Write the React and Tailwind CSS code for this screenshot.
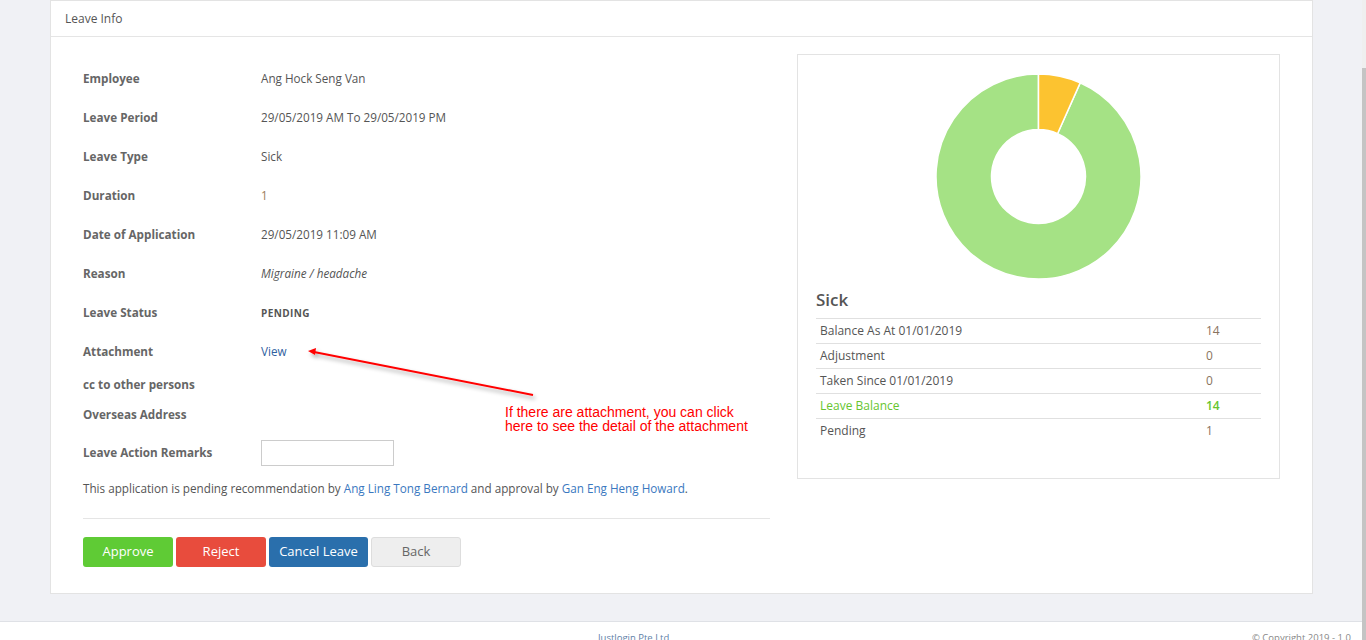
import React from "react";

const rows = [
  { label: "Employee", value: "Ang Hock Seng Van", h: "h-[39px]" },
  { label: "Leave Period", value: "29/05/2019 AM To 29/05/2019 PM", h: "h-[39px]" },
  { label: "Leave Type", value: "Sick", h: "h-[39px]" },
  { label: "Duration", value: <span className="text-[#9b7b5b]">1</span>, h: "h-[39px]" },
  { label: "Date of Application", value: "29/05/2019 11:09 AM", h: "h-[39px]" },
  { label: "Reason", value: <span className="italic">Migraine / headache</span>, h: "h-[39px]" },
  {
    label: "Leave Status",
    value: <span className="text-[10px] font-bold tracking-[0.4px] text-[#555]">PENDING</span>,
    h: "h-[39px]",
  },
  { label: "Attachment", value: <span className="text-[#2f5f9f]">View</span>, h: "h-[40px]" },
  { label: "cc to other persons", value: "", h: "h-[25px]" },
  { label: "Overseas Address", value: "", h: "h-[35px]" },
  {
    label: "Leave Action Remarks",
    value: <div className="w-[133px] h-[26px] border border-[#ccc] bg-white" />,
    h: "h-[42px]",
  },
];

const table = [
  ["Balance As At 01/01/2019", "14", false],
  ["Adjustment", "0", false],
  ["Taken Since 01/01/2019", "0", false],
  ["Leave Balance", "14", true],
  ["Pending", "1", false],
];

function Donut() {
  const cx = 102.5, cy = 102.5, R = 102.5, r = 47;
  const a = (24 * Math.PI) / 180;
  const ox = cx + R * Math.sin(a), oy = cy - R * Math.cos(a);
  const ix = cx + r * Math.sin(a), iy = cy - r * Math.cos(a);
  const yellow = `M ${cx} ${cy - R} A ${R} ${R} 0 0 1 ${ox} ${oy} L ${ix} ${iy} A ${r} ${r} 0 0 0 ${cx} ${cy - r} Z`;
  const green = `M ${ox} ${oy} A ${R} ${R} 0 1 1 ${cx} ${cy - R} L ${cx} ${cy - r} A ${r} ${r} 0 1 0 ${ix} ${iy} Z`;
  return (
    <svg width="205" height="205" viewBox="0 0 205 205">
      <path d={green} fill="#a5e285" stroke="#fff" strokeWidth="1.5" />
      <path d={yellow} fill="#fcc330" stroke="#fff" strokeWidth="1.5" />
    </svg>
  );
}

export default function App() {
  return (
    <div className="flex w-[1366px] h-[640px] overflow-hidden" style={{ fontFamily: '"Open Sans", "Noto Sans", sans-serif' }}>
      <div className="flex-1 flex flex-col">
        <div className="h-[622px] bg-[#f0f1f5] pl-[50px] pr-[49px] border-b border-[#dfe1e6]">
          <div className="bg-white border border-[#e3e3e3] h-[594px] flex flex-col">
            <div className="h-[36px] shrink-0 border-b border-[#e5e5e5] flex items-center pl-[14px] text-[12px] text-[#555]">
              Leave Info
            </div>
            <div className="flex pl-[32px] pr-[32px] pt-[17px]">
              <div className="w-[687px] relative text-[11.7px] text-[#555]">
                <div className="pt-[5px]">
                  {rows.map((r) => (
                    <div key={r.label} className={`flex items-center ${r.h}`}>
                      <div className="w-[178px] font-bold text-[#666]">{r.label}</div>
                      <div>{r.value}</div>
                    </div>
                  ))}
                  <div className="h-[29px] flex items-center">
                    This application is pending recommendation by&nbsp;
                    <span className="text-[#3a78c0]">Ang Ling Tong Bernard</span>&nbsp;and approval by&nbsp;
                    <span className="text-[#3a78c0]">Gan Eng Heng Howard</span>.
                  </div>
                </div>
                <div className="mt-[15px] border-t border-[#e5e5e5]" />
                <div className="mt-[18px] flex gap-[3px] text-[13px]">
                  <button className="w-[90px] h-[30px] rounded-[3px] bg-[#5fcb35] text-white">Approve</button>
                  <button className="w-[90px] h-[30px] rounded-[3px] bg-[#e84c3d] text-white">Reject</button>
                  <button className="w-[99px] h-[30px] rounded-[3px] bg-[#2a6fac] text-white">Cancel Leave</button>
                  <button className="w-[90px] h-[30px] rounded-[3px] bg-[#eeeeee] border border-[#dddddd] text-[#666]">Back</button>
                </div>
                <svg className="absolute left-[-83px] top-[-55px] pointer-events-none" width="700" height="500" style={{ overflow: "visible" }}>
                  <defs>
                    <filter id="sh" x="-20%" y="-50%" width="140%" height="200%">
                      <feDropShadow dx="2" dy="3" stdDeviation="2" floodColor="#000" floodOpacity="0.35" />
                    </filter>
                  </defs>
                  <g filter="url(#sh)">
                    <line x1="533" y1="396" x2="314" y2="353" stroke="#f00" strokeWidth="2" />
                    <path d="M 308 352 L 316 349 L 315 356 Z" fill="#f00" />
                  </g>
                </svg>
                <div
                  className="absolute left-[422px] top-[351px] text-[14px] leading-[14px] text-[#f00] whitespace-nowrap"
                  style={{ fontFamily: '"Liberation Sans", Arial, sans-serif' }}
                >
                  If there are attachment, you can click
                  <br />
                  here to see the detail of the attachment
                </div>
              </div>
              <div className="ml-[27px] w-[483px] h-[425px] border border-[#e3e3e3] px-[18px] pt-[19px] flex flex-col">
                <div className="flex justify-center">
                  <Donut />
                </div>
                <div className="mt-[9px] text-[17px] font-semibold text-[#555] leading-[24px]">Sick</div>
                <div className="mt-[6px] text-[12px] text-[#555]">
                  {table.map(([k, v, g]) => (
                    <div key={k} className="h-[25px] border-t border-[#e0e0e0] flex items-center px-[4px]">
                      <div className={`flex-1 ${g ? "text-[#66c52f]" : ""}`}>{k}</div>
                      <div className={`w-[51px] ${g ? "text-[#66c52f] font-semibold" : "text-[#8a735e]"}`}>{v}</div>
                    </div>
                  ))}
                </div>
              </div>
            </div>
          </div>
        </div>
        <div className="flex-1 bg-white relative text-[9.5px]">
          <div className="absolute left-[598px] top-[9px] text-[#5f7fa8]">Justlogin Pte Ltd</div>
          <div className="absolute left-[1252px] top-[9px] text-[#888]">© Copyright 2019 - 1.0</div>
        </div>
      </div>
      <div className="w-[4px] flex flex-col">
        <div className="h-[68px] bg-[#efefef]" />
        <div className="flex-1 bg-[#c4c4c4]" />
      </div>
    </div>
  );
}
